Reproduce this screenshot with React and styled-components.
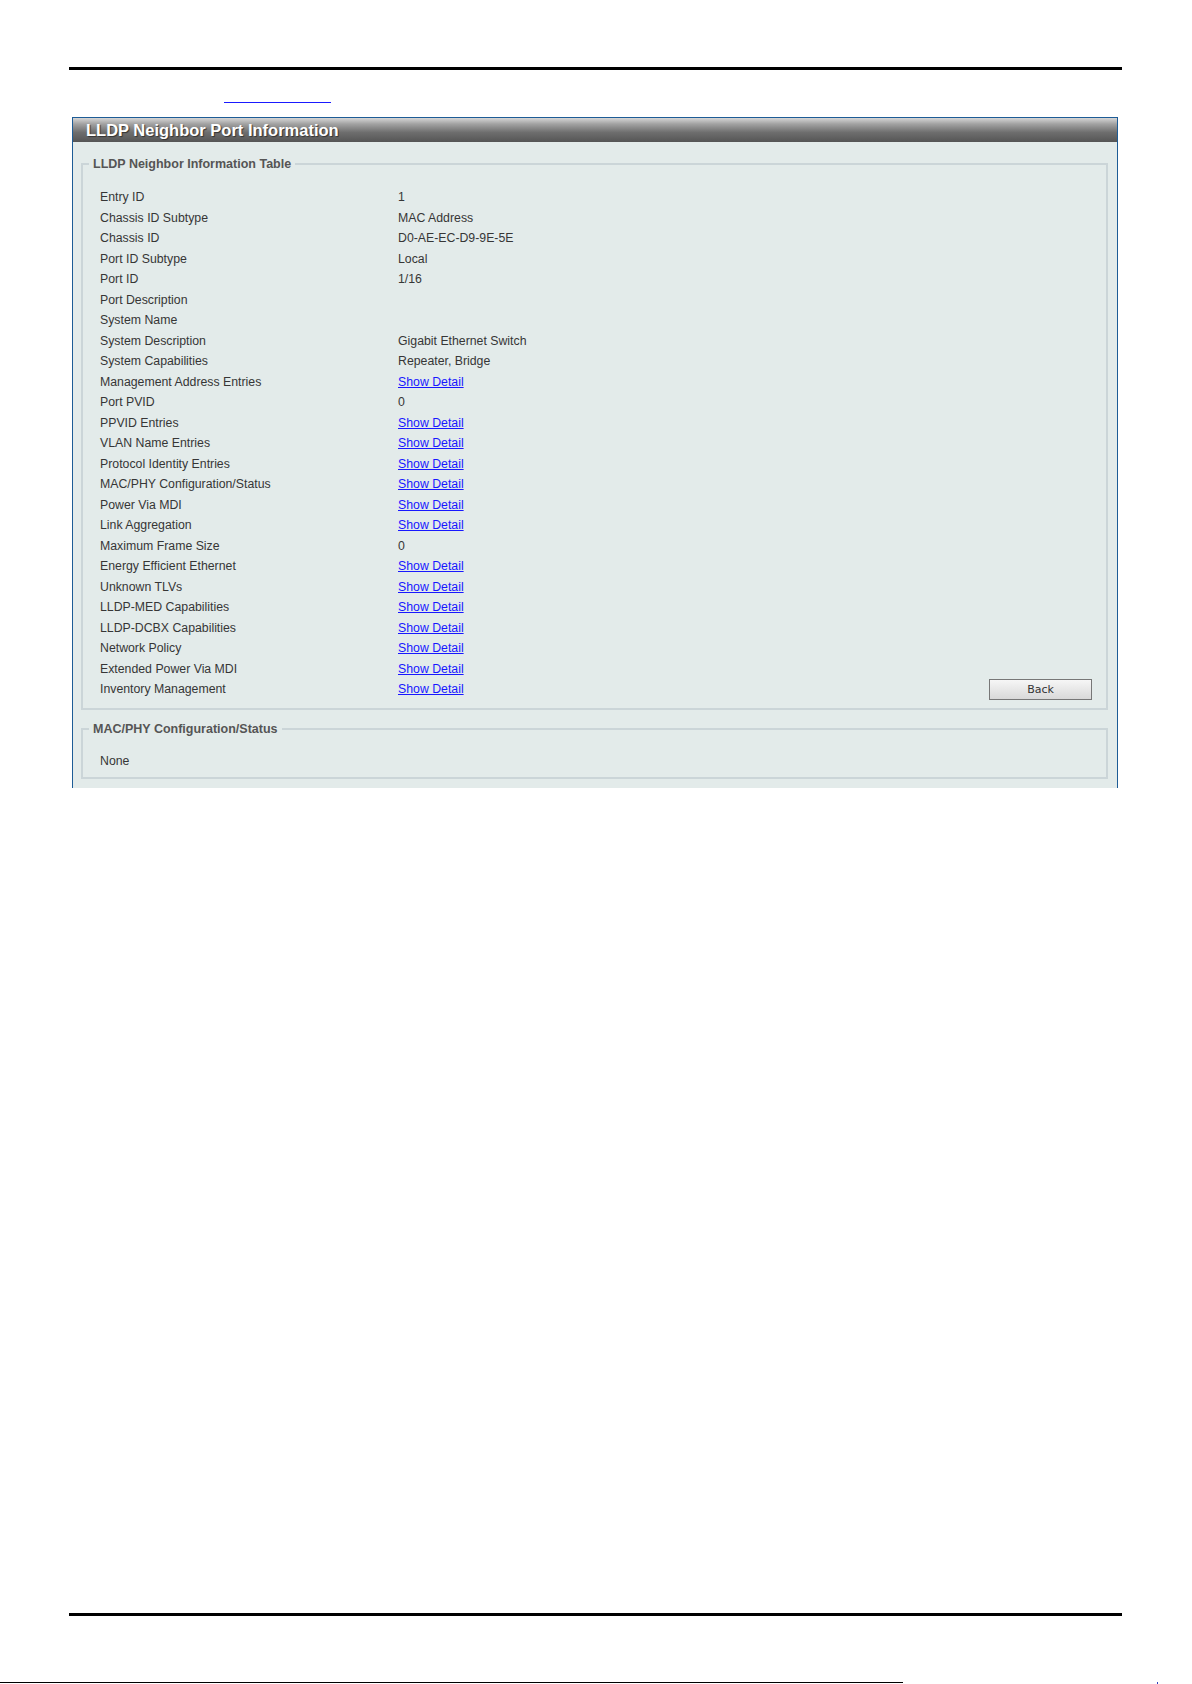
import React from 'react';
import styled, { createGlobalStyle } from 'styled-components';

const Global = createGlobalStyle`
  html, body { margin: 0; padding: 0; background: #fff; }
  body { font-family: "Liberation Sans", Arial, sans-serif; }
`;

const Page = styled.div`
  width: 1192px;
  height: 1684px;
  display: flex;
  flex-direction: column;
  overflow: hidden;
`;

const Rule = styled.div`
  height: 3px;
  background: #000;
  margin: ${p => p.top || 0}px 70px 0 69px;
`;

const Crumb = styled.div`
  height: 47px;
  padding-left: 224px;
  box-sizing: border-box;
`;

const CrumbLink = styled.a`
  display: block;
  width: 107px;
  height: 32px;
  border-bottom: 1px solid #1a1aff;
`;

const Panel = styled.div`
  margin-left: 72px;
  width: 1046px;
  box-sizing: border-box;
  border: 1px solid #1d5c96;
  border-bottom: none;
  background: #e3ebea;
  padding-bottom: 9px;
`;

const Header = styled.div`
  height: 24px;
  background: linear-gradient(#d6d6d6 0%, #a2a2a2 25%, #6e6e6e 60%, #555 100%);
  color: #fff;
  font-weight: bold;
  font-size: 16.5px;
  line-height: 24px;
  padding-left: 13px;
  text-shadow: 1px 1px 1px #333;
`;

const Box = styled.fieldset`
  margin: ${p => p.top}px 9px 0 8px;
  border: 2px solid #cbd5d8;
  padding: ${p => p.pt}px 14px ${p => p.pb}px 17px;
  min-width: 0;
`;

const Legend = styled.legend`
  margin-left: -11px;
  padding: 0 4px;
  font-size: 12.5px;
  line-height: 14px;
  font-weight: bold;
  color: #555;
`;

const Grid = styled.div`
  display: grid;
  grid-template-columns: 298px 1fr auto;
  grid-auto-rows: 20.5px;
  align-items: center;
  font-size: 12.3px;
  color: #363636;
`;

const Cell = styled.div`
  white-space: nowrap;
`;

const Detail = styled.a`
  color: #1818ff;
  text-decoration: underline;
  cursor: pointer;
`;

const Back = styled.button`
  width: 103px;
  height: 21px;
  border: 1px solid #777;
  border-radius: 0;
  background: linear-gradient(#f6f6f6, #d9d9d9);
  font-family: "DejaVu Sans", Verdana, sans-serif;
  font-size: 11px;
  color: #333;
  padding: 0;
`;

const Footer = styled.div`
  margin-top: auto;
  display: flex;
  flex-direction: column;
`;

const BottomLine = styled.div`
  margin-top: 66px;
  height: 2px;
  display: flex;
  align-items: flex-start;
`;

const Thin = styled.div`
  width: 903px;
  height: 1px;
  background: #000;
`;

const Mark = styled.div`
  margin-left: 254px;
  width: 1px;
  height: 2px;
  background: #3040c0;
`;

const rows = [
  ['Entry ID', '1'],
  ['Chassis ID Subtype', 'MAC Address'],
  ['Chassis ID', 'D0-AE-EC-D9-9E-5E'],
  ['Port ID Subtype', 'Local'],
  ['Port ID', '1/16'],
  ['Port Description', ''],
  ['System Name', ''],
  ['System Description', 'Gigabit Ethernet Switch'],
  ['System Capabilities', 'Repeater, Bridge'],
  ['Management Address Entries', null],
  ['Port PVID', '0'],
  ['PPVID Entries', null],
  ['VLAN Name Entries', null],
  ['Protocol Identity Entries', null],
  ['MAC/PHY Configuration/Status', null],
  ['Power Via MDI', null],
  ['Link Aggregation', null],
  ['Maximum Frame Size', '0'],
  ['Energy Efficient Ethernet', null],
  ['Unknown TLVs', null],
  ['LLDP-MED Capabilities', null],
  ['LLDP-DCBX Capabilities', null],
  ['Network Policy', null],
  ['Extended Power Via MDI', null],
  ['Inventory Management', null],
];

export default function App() {
  return (
    <Page>
      <Global />
      <Rule top={67} />
      <Crumb>
        <CrumbLink href="#" />
      </Crumb>
      <Panel>
        <Header>LLDP Neighbor Port Information</Header>
        <Box top={15} pt={16} pb={8}>
          <Legend>LLDP Neighbor Information Table</Legend>
          <Grid>
            {rows.map(([label, value], i) => (
              <React.Fragment key={label}>
                <Cell>{label}</Cell>
                <Cell>{value === null ? <Detail>Show Detail</Detail> : value}</Cell>
                <Cell>{i === rows.length - 1 ? <Back>Back</Back> : null}</Cell>
              </React.Fragment>
            ))}
          </Grid>
        </Box>
        <Box top={12} pt={15} pb={6}>
          <Legend>MAC/PHY Configuration/Status</Legend>
          <Grid>
            <Cell>None</Cell>
          </Grid>
        </Box>
      </Panel>
      <Footer>
        <Rule />
        <BottomLine>
          <Thin />
          <Mark />
        </BottomLine>
      </Footer>
    </Page>
  );
}
